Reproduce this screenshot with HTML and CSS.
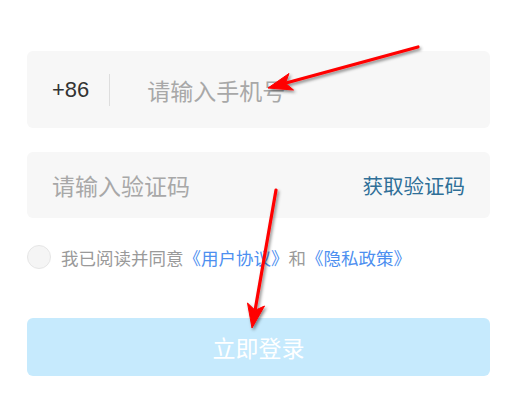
FILE: index.html
```html
<!DOCTYPE html>
<html lang="zh-CN">
<head>
    <meta charset="UTF-8">
    <meta name="viewport" content="width=device-width, initial-scale=1.0">
    <title>登录</title>
    <link rel="stylesheet" href="styles.css">
</head>
<body>
    <div class="login">
        <div class="field phone-field">
            <span class="area-code">+86</span>
            <span class="divider"></span>
            <input type="text" class="field-input" placeholder="请输入手机号">
        </div>

        <div class="field code-field">
            <input type="text" class="field-input" placeholder="请输入验证码">
            <a class="get-code">获取验证码</a>
        </div>

        <div class="agreement">
            <span class="check"></span>
            <span>我已阅读并同意</span>
            <a class="link">《用户协议》</a>
            <span>和</span>
            <a class="link">《隐私政策》</a>
        </div>

        <button class="submit">立即登录</button>

        <!-- annotation arrows drawn over the form -->
        <svg class="arrows" width="523" height="412" viewBox="0 0 523 412">
            <defs>
                <filter id="shadow" x="-20%" y="-20%" width="140%" height="140%">
                    <feDropShadow dx="1.5" dy="2" stdDeviation="1.5" flood-color="#000" flood-opacity="0.45"/>
                </filter>
            </defs>
            <g filter="url(#shadow)" fill="#ff0000" stroke="#ff0000">
                <line x1="418" y1="47" x2="286" y2="83" stroke-width="3.2" stroke-linecap="round"/>
                <polygon points="268,88 293.5,90 285.4,83.2 289,73.5" stroke-width="1" stroke-linejoin="round"/>
                <line x1="276" y1="190" x2="255.3" y2="309" stroke-width="3.2" stroke-linecap="round"/>
                <polygon points="252,328 264.5,306 255.1,310.3 247.5,303" stroke-width="1" stroke-linejoin="round"/>
            </g>
        </svg>
    </div>
</body>
</html>
```

FILE: styles.css
```css
body {
    margin: 0;
    background-color: #fff;
    font-family: "Noto Sans CJK SC", "Liberation Sans", sans-serif;
}
.login {
    position: relative;
    height: 412px;
    padding: 51px 33px 0 27px;
    box-sizing: border-box;
    overflow: hidden;
}
.field {
    display: flex;
    align-items: center;
    background-color: #f7f7f7;
    border-radius: 6px;
    padding: 0 25px;
}
.phone-field {
    height: 77px;
}
.code-field {
    height: 66px;
    margin-top: 24px;
    justify-content: space-between;
}
.area-code {
    font-family: "Liberation Sans", sans-serif;
    font-size: 22px;
    color: #333;
}
.divider {
    width: 1px;
    height: 32px;
    background-color: #dedede;
    margin: 0 37px 0 20px;
}
.field-input {
    flex: 1;
    min-width: 0;
    border: none;
    outline: none;
    background: transparent;
    padding: 0;
    font-family: "Noto Sans CJK SC", sans-serif;
    font-size: 23px;
    color: #333;
}
.field-input::placeholder {
    color: #a8a8a8;
}
.get-code {
    font-size: 20.5px;
    color: #2f6f97;
}
.agreement {
    display: flex;
    align-items: center;
    margin-top: 27px;
    height: 24px;
    font-size: 17.5px;
    color: #9a9a9a;
}
.check {
    width: 22px;
    height: 22px;
    border-radius: 50%;
    border: 1px solid #e6e6e6;
    background-color: #f5f5f5;
    margin-right: 10px;
}
.link {
    color: #4d8ff0;
}
.submit {
    display: block;
    width: 100%;
    height: 58px;
    margin-top: 49px;
    border: none;
    border-radius: 6px;
    background-color: #c6eafd;
    color: #fff;
    font-family: "Noto Sans CJK SC", sans-serif;
    font-size: 23px;
    cursor: pointer;
}
.arrows {
    position: absolute;
    left: 0;
    top: 0;
    pointer-events: none;
}
```
